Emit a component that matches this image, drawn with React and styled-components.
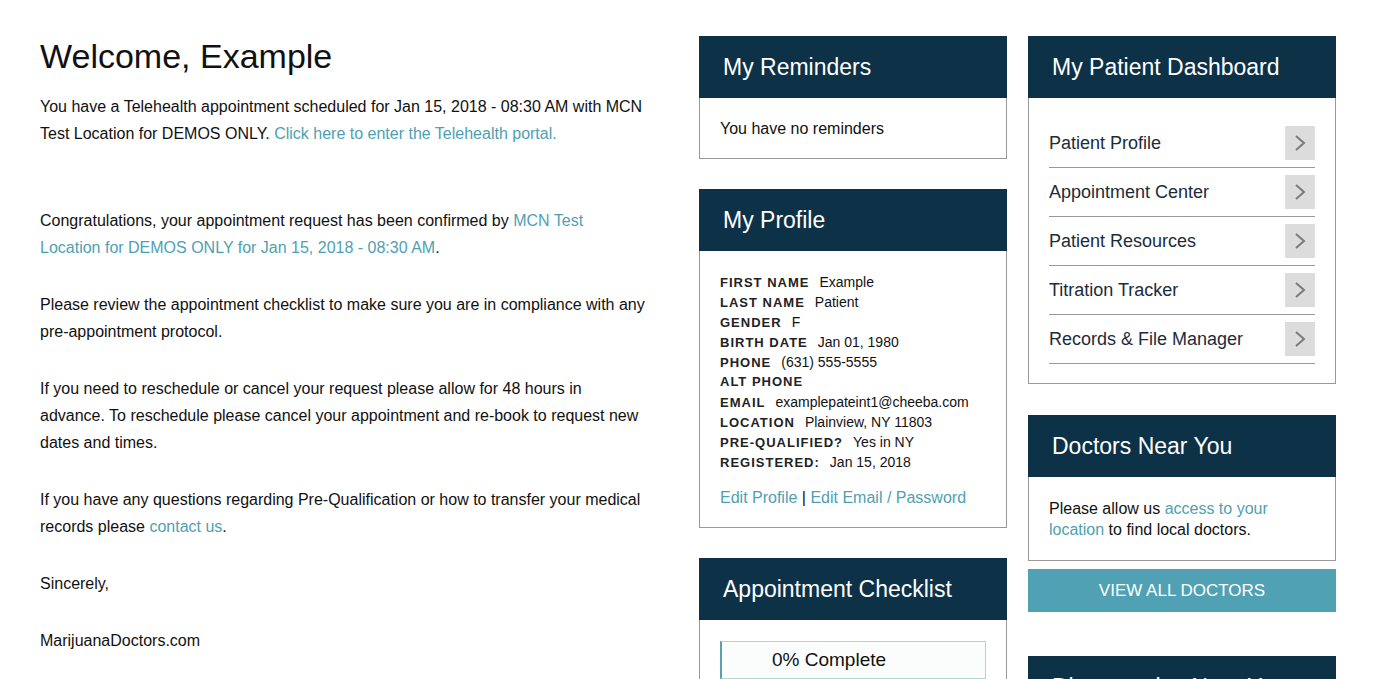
import styled, { createGlobalStyle } from "styled-components";

const GlobalStyle = createGlobalStyle`
  body {
    margin: 0;
    background: #fff;
    font-family: "Liberation Sans", Arial, sans-serif;
    color: #111;
  }
`;

const profile = [
  ["First Name", "Example"],
  ["Last Name", "Patient"],
  ["Gender", "F"],
  ["Birth Date", "Jan 01, 1980"],
  ["Phone", "(631) 555-5555"],
  ["Alt Phone", ""],
  ["Email", "examplepateint1@cheeba.com"],
  ["Location", "Plainview, NY 11803"],
  ["Pre-Qualified?", "Yes in NY"],
  ["Registered:", "Jan 15, 2018"],
];

const dashboard = [
  "Patient Profile",
  "Appointment Center",
  "Patient Resources",
  "Titration Tracker",
  "Records & File Manager",
];

const App = () => {
  return (
    <Page>
      <GlobalStyle />
      <Letter>
        <Title>Welcome, Example</Title>
        <Para $after={60}>
          You have a Telehealth appointment scheduled for Jan 15, 2018 - 08:30 AM with MCN
          Test Location for DEMOS ONLY. <Link>Click here to enter the Telehealth portal.</Link>
        </Para>
        <Para>
          Congratulations, your appointment request has been confirmed by{" "}
          <Link>MCN Test Location for DEMOS ONLY for Jan 15, 2018 - 08:30 AM</Link>.
        </Para>
        <Para>
          Please review the appointment checklist to make sure you are in compliance with any
          pre-appointment protocol.
        </Para>
        <Para>
          If you need to reschedule or cancel your request please allow for 48 hours in
          advance. To reschedule please cancel your appointment and re-book to request new
          dates and times.
        </Para>
        <Para>
          If you have any questions regarding Pre-Qualification or how to transfer your medical
          records please <Link>contact us</Link>.
        </Para>
        <Para>Sincerely,</Para>
        <Para>MarijuanaDoctors.com</Para>
      </Letter>

      <Column $gap={30}>
        <Panel>
          <PanelHead>My Reminders</PanelHead>
          <PanelBody>You have no reminders</PanelBody>
        </Panel>

        <Panel>
          <PanelHead>My Profile</PanelHead>
          <ProfileBody>
            {profile.map(([label, value]) => (
              <ProfileRow key={label}>
                <Label>{label}</Label>
                <Value>{value}</Value>
              </ProfileRow>
            ))}
            <EditLinks>
              <Link>Edit Profile</Link> | <Link>Edit Email / Password</Link>
            </EditLinks>
          </ProfileBody>
        </Panel>

        <Panel>
          <PanelHead>Appointment Checklist</PanelHead>
          <ChecklistBody>
            <Progress>0% Complete</Progress>
          </ChecklistBody>
        </Panel>
      </Column>

      <Column $gap={31}>
        <Panel>
          <PanelHead>My Patient Dashboard</PanelHead>
          <DashList>
            {dashboard.map((item) => (
              <DashItem key={item}>
                {item}
                <Chevron>
                  <svg width="14" height="18" viewBox="0 0 14 18">
                    <path d="M3 2 L11 9 L3 16" fill="none" stroke="#7a7a7a" strokeWidth="2" />
                  </svg>
                </Chevron>
              </DashItem>
            ))}
          </DashList>
        </Panel>

        <Group>
          <Panel>
            <PanelHead>Doctors Near You</PanelHead>
            <DoctorsBody>
              Please allow us <Link>access to your location</Link> to find local doctors.
            </DoctorsBody>
          </Panel>
          <WideButton>View All Doctors</WideButton>
        </Group>

        <Panel>
          <PanelHead>Dispensaries Near You</PanelHead>
        </Panel>
      </Column>
    </Page>
  );
};

export default App;

const Page = styled.div`
  display: flex;
  align-items: flex-start;
  padding: 36px 0 0 40px;
  height: 679px;
  box-sizing: border-box;
  overflow: hidden;
`;

const Letter = styled.div`
  width: 606px;
  margin-right: 53px;
  font-size: 16px;
  line-height: 27px;
  color: #111;
`;

const Title = styled.h1`
  margin: 0 0 17px;
  font-size: 34px;
  font-weight: normal;
  line-height: 40px;
`;

const Para = styled.p`
  margin: 0 0 ${(p) => (p.$after ? p.$after : 30)}px;
`;

const Link = styled.a`
  color: #4f9fb2;
  cursor: pointer;
`;

const Column = styled.div`
  width: 308px;
  margin-right: 21px;
  display: flex;
  flex-direction: column;
  gap: ${(p) => p.$gap}px;
`;

const Group = styled.div`
  display: flex;
  flex-direction: column;
  gap: 8px;
  margin-bottom: 13px;
`;

const Panel = styled.div`
  border: 1px solid #999;
  border-top: none;
  background: #fff;
`;

const PanelHead = styled.div`
  background: #0d3147;
  color: #fff;
  height: 62px;
  display: flex;
  align-items: center;
  padding-left: 24px;
  margin: 0 -1px;
  font-size: 23px;
  white-space: nowrap;
`;

const PanelBody = styled.div`
  padding: 21px 20px 20px;
  font-size: 16px;
  line-height: 19px;
`;

const ProfileBody = styled.div`
  padding: 21px 20px 19px;
`;

const ProfileRow = styled.div`
  display: flex;
  align-items: baseline;
  height: 20px;
  line-height: 20px;
`;

const Label = styled.span`
  font-size: 13px;
  font-weight: bold;
  letter-spacing: 1px;
  text-transform: uppercase;
  color: #222;
  margin-right: 10px;
`;

const Value = styled.span`
  font-size: 14px;
  color: #111;
`;

const EditLinks = styled.div`
  margin-top: 16px;
  font-size: 16px;
  line-height: 20px;
`;

const ChecklistBody = styled.div`
  padding: 21px 20px 20px;
`;

const Progress = styled.div`
  height: 36px;
  border: 1px solid #b6d3cf;
  border-left: 2px solid #5d9fb0;
  background: #fbfdfd;
  display: flex;
  align-items: center;
  padding-left: 50px;
  font-size: 19px;
  color: #111;
`;

const DashList = styled.div`
  padding: 21px 20px 19px;
`;

const DashItem = styled.div`
  box-sizing: border-box;
  height: 49px;
  border-bottom: 1px solid #999;
  display: flex;
  align-items: center;
  justify-content: space-between;
  font-size: 18px;
  color: #1c2c3a;
`;

const Chevron = styled.span`
  width: 30px;
  height: 34px;
  background: #dcdcdc;
  display: flex;
  align-items: center;
  justify-content: center;
`;

const DoctorsBody = styled.div`
  padding: 21px 20px 20px;
  font-size: 16px;
  line-height: 21px;
`;

const WideButton = styled.button`
  height: 43px;
  border: none;
  background: #4fa1b3;
  color: #fff;
  font-family: "Liberation Sans", Arial, sans-serif;
  font-size: 17px;
  text-transform: uppercase;
  cursor: pointer;
`;
